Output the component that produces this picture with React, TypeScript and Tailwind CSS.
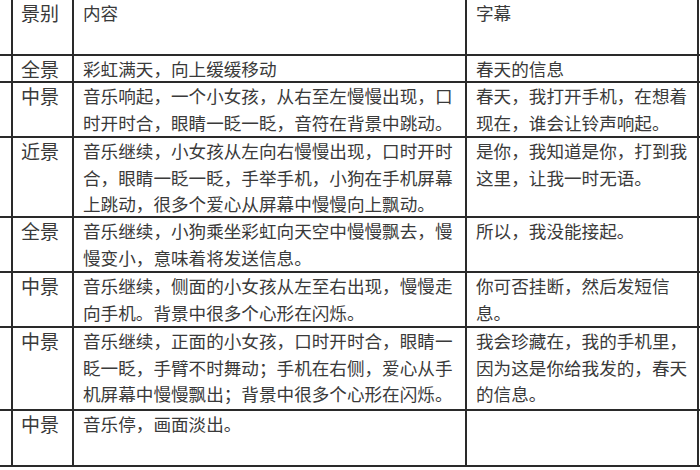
const ROWS = [
  { shot: '景别', content: '内容', caption: '字幕' },
  { shot: '全景', content: '彩虹满天，向上缓缓移动', caption: '春天的信息' },
  { shot: '中景', content: '音乐响起，一个小女孩，从右至左慢慢出现，口时开时合，眼睛一眨一眨，音符在背景中跳动。', caption: '春天，我打开手机，在想着现在，谁会让铃声响起。' },
  { shot: '近景', content: '音乐继续，小女孩从左向右慢慢出现，口时开时合，眼睛一眨一眨，手举手机，小狗在手机屏幕上跳动，很多个爱心从屏幕中慢慢向上飘动。', caption: '是你，我知道是你，打到我这里，让我一时无语。' },
  { shot: '全景', content: '音乐继续，小狗乘坐彩虹向天空中慢慢飘去，慢慢变小，意味着将发送信息。', caption: '所以，我没能接起。' },
  { shot: '中景', content: '音乐继续，侧面的小女孩从左至右出现，慢慢走向手机。背景中很多个心形在闪烁。', caption: '你可否挂断，然后发短信息。' },
  { shot: '中景', content: '音乐继续，正面的小女孩，口时开时合，眼睛一眨一眨，手臂不时舞动；手机在右侧，爱心从手机屏幕中慢慢飘出；背景中很多个心形在闪烁。', caption: '我会珍藏在，我的手机里，因为这是你给我发的，春天的信息。' },
  { shot: '中景', content: '音乐停，画面淡出。', caption: '' },
]

const cell = 'border-b-2 border-[#2a2a2a]'

export default function App() {
  return (
    <div className="w-[700px] h-[470px] bg-white overflow-hidden text-[#3a3a3a] font-['Noto_Sans_CJK_SC',sans-serif]">
      <div className="grid grid-cols-[13px_61px_393px_232px_1fr] grid-rows-[56px_27px_55px_80px_55px_55px_83px_56px]">
        {ROWS.map((r, i) => (
          <div key={i} className="contents">
            <div className={`${cell} border-r-2`} />
            <div className={`${cell} border-r-2 pl-2 text-[19px] leading-[25px] whitespace-nowrap`}>{r.shot}</div>
            <div className={`${cell} border-r-2 pl-[9px] pr-1 text-[17.6px] leading-[26.5px]`}>{r.content}</div>
            <div className={`${cell} border-r-2 pl-[9px] pr-1 text-[17.6px] leading-[26.5px]`}>{r.caption}</div>
            <div className={cell} />
          </div>
        ))}
      </div>
    </div>
  )
}
